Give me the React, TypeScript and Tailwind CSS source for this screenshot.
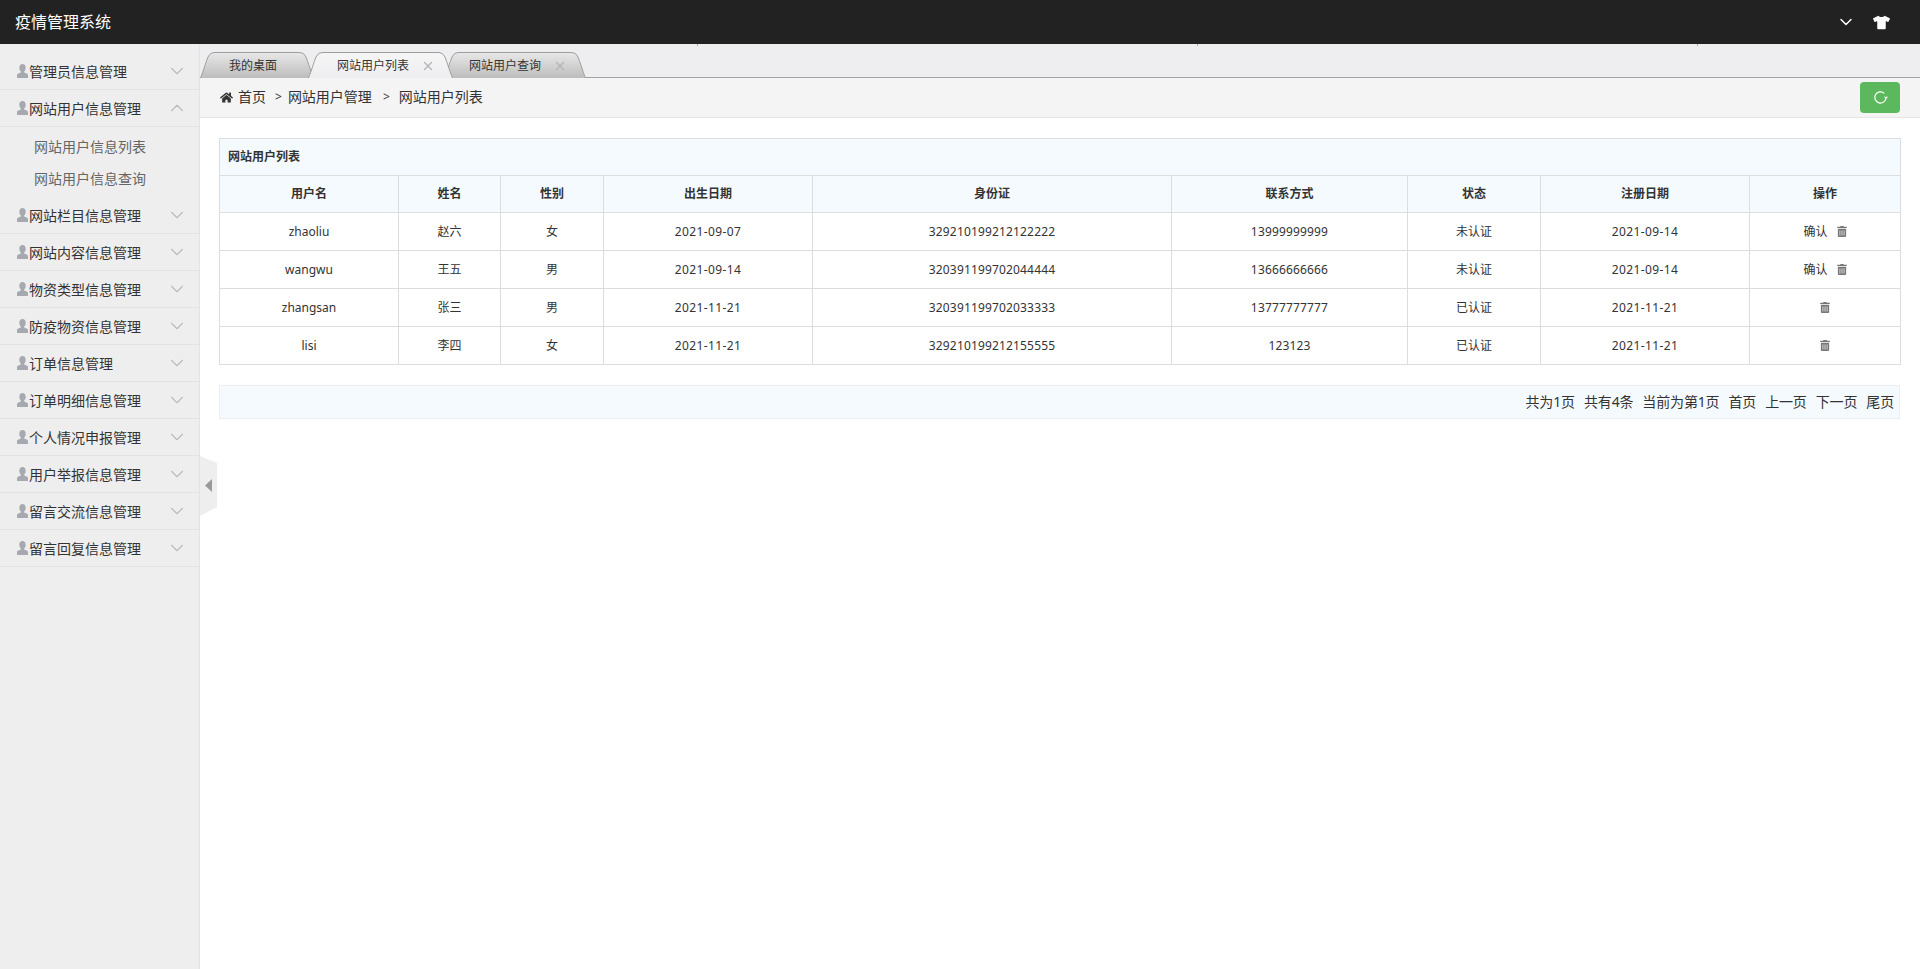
import { ChevronDown, ChevronUp, X } from 'lucide-react';
import { FaHome, FaTrashAlt, FaTshirt } from 'react-icons/fa';

const menus = [
  '管理员信息管理',
  '网站用户信息管理',
  '网站栏目信息管理',
  '网站内容信息管理',
  '物资类型信息管理',
  '防疫物资信息管理',
  '订单信息管理',
  '订单明细信息管理',
  '个人情况申报管理',
  '用户举报信息管理',
  '留言交流信息管理',
  '留言回复信息管理',
];

const users = [
  { username: 'zhaoliu', name: '赵六', sex: '女', birth: '2021-09-07', idCard: '329210199212122222', phone: '13999999999', status: '未认证', date: '2021-09-14', confirm: true },
  { username: 'wangwu', name: '王五', sex: '男', birth: '2021-09-14', idCard: '320391199702044444', phone: '13666666666', status: '未认证', date: '2021-09-14', confirm: true },
  { username: 'zhangsan', name: '张三', sex: '男', birth: '2021-11-21', idCard: '320391199702033333', phone: '13777777777', status: '已认证', date: '2021-11-21', confirm: false },
  { username: 'lisi', name: '李四', sex: '女', birth: '2021-11-21', idCard: '329210199212155555', phone: '123123', status: '已认证', date: '2021-11-21', confirm: false },
];

const UserIcon = () => (
  <svg viewBox="0 0 11 14" className="w-[11px] h-[14px] shrink-0 text-[#a6aab0]" fill="currentColor">
    <path d="M5.500 0C7.500 0 8.700 1.600 8.700 3.900c0 1.500-.6 2.800-1.500 3.500v1l2.400 1c.9.4 1.400 1 1.400 1.900V14H0v-2.700c0-.9.5-1.500 1.400-1.900l2.400-1v-1C2.900 6.700 2.300 5.400 2.300 3.900 2.300 1.600 3.500 0 5.500 0z" />
  </svg>
);

const RefreshIcon = () => (
  <svg viewBox="0 0 15 15" className="w-[15px] h-[15px] text-white" fill="none" stroke="currentColor" strokeWidth="1.2">
    <path d="M11.300 3.400A5.600 5.600 0 1 0 13 7.500" />
    <path d="M11 6.800h4l-2 2.400z" fill="currentColor" stroke="none" />
  </svg>
);

const Tab = ({ label, width, active, closable, className }: { label: string; width: number; active?: boolean; closable?: boolean; className: string }) => {
  const w = width;
  return (
    <div className={className}>
      <svg className="absolute inset-0" width={w} height={26} viewBox={`0 0 ${w} 26`}>
        <defs>
          <linearGradient id={`tab-${w}`} x1="0" y1="0" x2="0" y2="1">
            <stop offset="0" stopColor={active ? '#f6f6f7' : '#e8e8e8'} />
            <stop offset="1" stopColor={active ? '#eeeef0' : '#bdbdbd'} />
          </linearGradient>
        </defs>
        <path
          d={`M0.500 26 C3 20 6 10 8 5 Q10 0.500 14 0.500 L${w - 14} 0.500 Q${w - 10} 0.500 ${w - 8} 5 C${w - 6} 10 ${w - 3} 20 ${w - 0.500} 26`}
          fill={`url(#tab-${w})`}
          stroke="#9e9e9e"
        />
      </svg>
      <span className="relative pt-[2px] text-xs text-[#333]">{label}</span>
      {closable && <X className="relative ml-[12px] mt-[2px] w-[14px] h-[14px] text-[#b5b5b5]" strokeWidth={2.4} />}
    </div>
  );
};

export default function App() {
  const font = { fontFamily: '"Noto Sans", "Noto Sans CJK SC", sans-serif' };

  return (
    <div className="relative h-[969px] overflow-hidden bg-white text-[#333]" style={font}>
      {/* Header */}
      <header className="h-[44px] bg-[#222222] flex items-center justify-between">
        <span className="ml-[15px] text-base text-white">疫情管理系统</span>
        <div className="flex items-center mr-[30px] gap-[17px] text-white">
          <ChevronDown className="w-[20px] h-[20px]" strokeWidth={1.8} />
          <FaTshirt className="w-[17px] h-[17px]" />
        </div>
      </header>

      <div className="flex h-[925px]">
        {/* Sidebar */}
        <aside className="w-[200px] shrink-0 bg-[#eeeeee] border-r border-[#e3e3e3] pt-[9px]">
          {menus.map((menu) => {
            const open = menu === '网站用户信息管理';
            return (
              <div key={menu}>
                <div className="h-[37px] flex items-center pl-[17px] pr-[11px] border-b border-[#e2e2e2] text-sm text-[#333]">
                  <UserIcon />
                  <span className="ml-px pt-px flex-1">{menu}</span>
                  {open ? (
                    <ChevronUp className="w-[22px] h-[22px] text-[#bbbbbb]" strokeWidth={1.2} />
                  ) : (
                    <ChevronDown className="w-[22px] h-[22px] text-[#bbbbbb]" strokeWidth={1.2} />
                  )}
                </div>
                {open && (
                  <div className="h-[70px] pt-[4px] pl-[34px] text-sm text-[#666]">
                    <div className="h-[32px] leading-[32px]">网站用户信息列表</div>
                    <div className="h-[32px] leading-[32px]">网站用户信息查询</div>
                  </div>
                )}
              </div>
            );
          })}
        </aside>

        {/* Main */}
        <main className="flex-1 min-w-0">
          <div className="relative h-[34px] bg-[#eeeef0] border-b border-[#a3a3a3] flex items-end">
            <span className="absolute left-[497px] top-0 w-px h-[2px] bg-[#aaaaaa]" />
            <span className="absolute left-[997px] top-0 w-px h-[2px] bg-[#aaaaaa]" />
            <span className="absolute left-[1497px] top-0 w-px h-[2px] bg-[#aaaaaa]" />
            <Tab label="我的桌面" width={114} className="relative z-0 h-[26px] w-[114px] -mb-px flex items-center pl-[29px]" />
            <Tab label="网站用户列表" width={145} active closable className="relative z-20 h-[26px] w-[145px] -ml-[6px] -mb-px flex items-center pl-[29px]" />
            <Tab label="网站用户查询" width={142} closable className="relative z-10 h-[26px] w-[142px] -ml-[9px] -mb-px flex items-center pl-[25px]" />
          </div>

          <div className="h-[40px] bg-[#f4f4f5] border-b border-[#e5e5e5] flex items-center pl-[20px] pr-[20px] pb-px text-sm">
            <FaHome className="w-[13px] h-[13px] text-[#333] mr-[5px]" />
            <span>首页</span>
            <span className="ml-[9px] mr-[6px] text-xs">&gt;</span>
            <span>网站用户管理</span>
            <span className="ml-[11px] mr-[9px] text-xs">&gt;</span>
            <span>网站用户列表</span>
            <button className="ml-auto w-[40px] h-[31px] rounded-[4px] bg-[#5cb85c] flex items-center justify-center">
              <RefreshIcon />
            </button>
          </div>

          <div className="pt-[20px] pl-[19px] pr-[20px]">
            <table className="w-[1681px] table-fixed border-collapse text-xs text-[#333] border border-[#dddddd]">
              <colgroup>
                <col className="w-[179px]" />
                <col className="w-[102px]" />
                <col className="w-[103px]" />
                <col className="w-[209px]" />
                <col className="w-[359px]" />
                <col className="w-[236px]" />
                <col className="w-[133px]" />
                <col className="w-[209px]" />
                <col className="w-[151px]" />
              </colgroup>
              <thead className="bg-[#f5fafe]">
                <tr className="h-[37px]">
                  <th colSpan={9} className="px-[8px] text-left font-bold border border-[#dddddd]">网站用户列表</th>
                </tr>
                <tr className="h-[37px]">
                  {['用户名', '姓名', '性别', '出生日期', '身份证', '联系方式', '状态', '注册日期', '操作'].map((h) => (
                    <th key={h} className="font-bold border border-[#dddddd]">{h}</th>
                  ))}
                </tr>
              </thead>
              <tbody className="text-center">
                {users.map((u) => (
                  <tr key={u.username} className="h-[38px]">
                    <td className="pt-px border border-[#dddddd]">{u.username}</td>
                    <td className="pt-px border border-[#dddddd]">{u.name}</td>
                    <td className="pt-px border border-[#dddddd]">{u.sex}</td>
                    <td className="pt-px tracking-[0.4px] border border-[#dddddd]">{u.birth}</td>
                    <td className="pt-px tracking-[0.16px] border border-[#dddddd]">{u.idCard}</td>
                    <td className="pt-px tracking-[0.16px] border border-[#dddddd]">{u.phone}</td>
                    <td className="pt-px border border-[#dddddd]">{u.status}</td>
                    <td className="pt-px tracking-[0.4px] border border-[#dddddd]">{u.date}</td>
                    <td className="border border-[#dddddd]">
                      <div className="flex items-center justify-center">
                        {u.confirm && <span className="mr-[9px]">确认</span>}
                        <FaTrashAlt className="w-[10px] h-[11px] text-[#777]" />
                      </div>
                    </td>
                  </tr>
                ))}
              </tbody>
            </table>

            <div className="mt-[20px] w-[1681px] h-[34px] bg-[#f5fafe] border border-[#eeeeee] flex items-center justify-end pr-[5px] pb-px gap-[9px] text-sm tracking-[-0.15px]">
              <span>共为1页</span>
              <span>共有4条</span>
              <span>当前为第1页</span>
              <span>首页</span>
              <span>上一页</span>
              <span>下一页</span>
              <span>尾页</span>
            </div>
          </div>
        </main>
      </div>

      {/* Sidebar collapse handle */}
      <svg className="absolute left-[200px] top-[456px]" width="17" height="60" viewBox="0 0 17 60">
        <path d="M0 0 L17 7 V51 L0 60 Z" fill="#eeeeee" />
        <path d="M12 23 L5 29.500 L12 36 Z" fill="#999999" />
      </svg>
    </div>
  );
}
